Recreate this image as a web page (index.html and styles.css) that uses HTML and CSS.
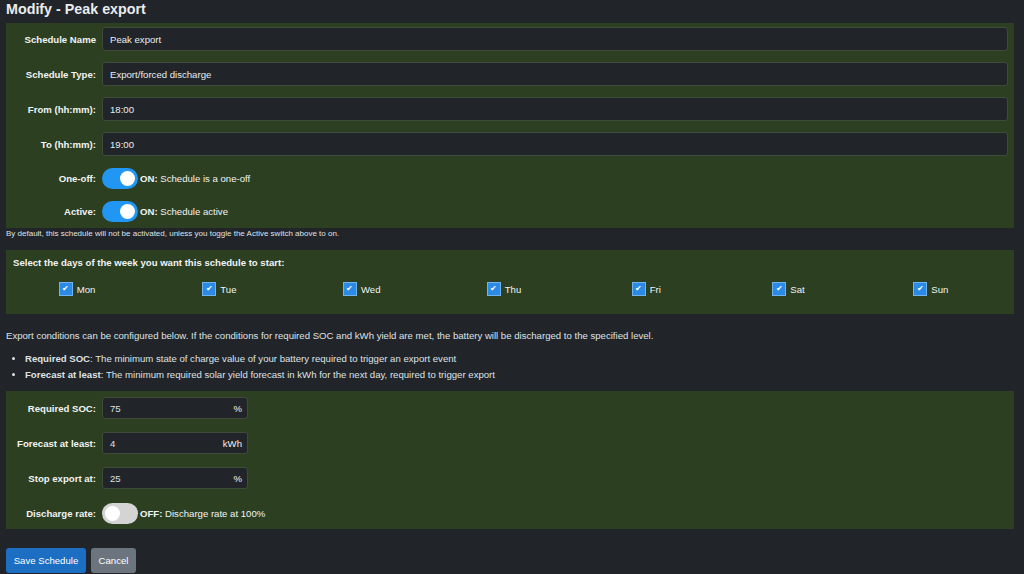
FILE: index.html
```html
<!DOCTYPE html>
<html lang="en">
<head>
  <meta charset="UTF-8" />
  <title>Modify - Peak export</title>
  <link rel="stylesheet" href="styles.css">
</head>
<body>
  <h1 class="title">Modify - Peak export</h1>

  <form class="schedule-form">
    <div class="panel panel-main">
      <div class="row">
        <label class="lbl">Schedule Name</label>
        <input class="field" type="text" value="Peak export">
      </div>
      <div class="row">
        <label class="lbl">Schedule Type:</label>
        <input class="field" type="text" value="Export/forced discharge">
      </div>
      <div class="row">
        <label class="lbl">From (hh:mm):</label>
        <input class="field" type="text" value="18:00">
      </div>
      <div class="row">
        <label class="lbl">To (hh:mm):</label>
        <input class="field" type="text" value="19:00">
      </div>
      <div class="row row-switch">
        <label class="lbl">One-off:</label>
        <span class="switch on"><span class="knob"></span></span>
        <span class="switch-text"><b>ON:</b> Schedule is a one-off</span>
      </div>
      <div class="row row-switch">
        <label class="lbl">Active:</label>
        <span class="switch on"><span class="knob"></span></span>
        <span class="switch-text"><b>ON:</b> Schedule active</span>
      </div>
    </div>

    <p class="note">By default, this schedule will not be activated, unless you toggle the Active switch above to on.</p>

    <div class="panel panel-days">
      <div class="days-title">Select the days of the week you want this schedule to start:</div>
      <div class="days">
        <label class="day"><span class="check">&#10004;</span>Mon</label>
        <label class="day"><span class="check">&#10004;</span>Tue</label>
        <label class="day"><span class="check">&#10004;</span>Wed</label>
        <label class="day"><span class="check">&#10004;</span>Thu</label>
        <label class="day"><span class="check">&#10004;</span>Fri</label>
        <label class="day"><span class="check">&#10004;</span>Sat</label>
        <label class="day"><span class="check">&#10004;</span>Sun</label>
      </div>
    </div>

    <p class="intro">Export conditions can be configured below. If the conditions for required SOC and kWh yield are met, the battery will be discharged to the specified level.</p>
    <ul class="hints">
      <li><b>Required SOC</b>: The minimum state of charge value of your battery required to trigger an export event</li>
      <li><b>Forecast at least</b>: The minimum required solar yield forecast in kWh for the next day, required to trigger export</li>
    </ul>

    <div class="panel panel-cond">
      <div class="row row-small">
        <label class="lbl">Required SOC:</label>
        <div class="unit-field"><span>75</span><span>%</span></div>
      </div>
      <div class="row row-small">
        <label class="lbl">Forecast at least:</label>
        <div class="unit-field"><span>4</span><span>kWh</span></div>
      </div>
      <div class="row row-small">
        <label class="lbl">Stop export at:</label>
        <div class="unit-field"><span>25</span><span>%</span></div>
      </div>
      <div class="row row-small">
        <label class="lbl">Discharge rate:</label>
        <span class="switch"><span class="knob"></span></span>
        <span class="switch-text"><b>OFF:</b> Discharge rate at 100%</span>
      </div>
    </div>

    <div class="actions">
      <button type="button" class="btn btn-save">Save Schedule</button>
      <button type="button" class="btn btn-cancel">Cancel</button>
    </div>
  </form>
</body>
</html>
```

FILE: styles.css
```css
body {
  margin: 0;
  background: #212529;
  color: #dee2e6;
  font-family: "Liberation Sans", Arial, sans-serif;
  font-size: 9.6px;
  height: 574px;
  overflow: hidden;
}

.title {
  margin: 0;
  padding: 0 6px;
  height: 23px;
  line-height: 18px;
  font-size: 14.3px;
  font-weight: bold;
  color: #e9ecef;
}

.panel {
  background: #2c4021;
  margin: 0 10px 0 6px;
}

.panel-main {
  padding: 4px 6px 6px 0;
  display: flex;
  flex-direction: column;
  gap: 11px;
}

.row {
  display: flex;
  align-items: center;
  gap: 6px;
  min-height: 24px;
}

.row-switch {
  min-height: 22px;
}

.lbl {
  width: 90px;
  text-align: right;
  font-weight: bold;
  color: #f1f3f5;
  flex-shrink: 0;
}

.field {
  flex: 1;
  height: 24px;
  box-sizing: border-box;
  background: #212529;
  border: 1px solid #3d4a3c;
  border-radius: 3px;
  color: #e9ecef;
  font-family: inherit;
  font-size: 9.6px;
  padding: 0 7px;
}

.switch {
  width: 36px;
  height: 21px;
  border-radius: 11px;
  background: #d4d4d4;
  position: relative;
  flex-shrink: 0;
}

.switch.on {
  background: #2196f3;
}

.switch .knob {
  position: absolute;
  top: 3px;
  left: 3px;
  width: 15px;
  height: 15px;
  border-radius: 50%;
  background: #fff;
}

.switch.on .knob {
  left: 18px;
}

.switch-text {
  margin-left: -4px;
  color: #f1f3f5;
}

.note {
  margin: 1px 0 0 6px;
  height: 21px;
  font-size: 8px;
  line-height: 10px;
  color: #dee2e6;
}

.panel-days {
  padding: 6px 12px 16px 0;
}

.days-title {
  padding-left: 7px;
  font-weight: bold;
  line-height: 14px;
  color: #f1f3f5;
}

.days {
  margin-top: 10px;
  display: grid;
  grid-template-columns: repeat(7, 1fr);
  justify-items: center;
  height: 18px;
  align-items: center;
}

.day {
  display: flex;
  align-items: center;
  gap: 4px;
  color: #f1f3f5;
}

.check {
  width: 14px;
  height: 14px;
  box-sizing: border-box;
  background: #2a8ae6;
  border: 1px solid #6fb3f0;
  color: #fff;
  font-size: 8px;
  line-height: 12px;
  text-align: center;
}

.intro {
  margin: 15px 0 0 6px;
  line-height: 14px;
}

.hints {
  margin: 8px 0 0 0;
  padding-left: 25px;
  line-height: 16px;
}

.panel-cond {
  margin-top: 8px;
  padding: 6px 6px 5px 0;
  display: flex;
  flex-direction: column;
  gap: 13px;
}

.row-small {
  min-height: 22px;
}

.unit-field {
  width: 146px;
  height: 22px;
  box-sizing: border-box;
  background: #212529;
  border: 1px solid #3d4a3c;
  border-radius: 3px;
  display: flex;
  justify-content: space-between;
  align-items: center;
  padding: 0 5px 0 7px;
}

.unit-field span:last-child {
  color: #f1f3f5;
}

.actions {
  margin: 19px 0 0 6px;
  display: flex;
  gap: 5px;
}

.btn {
  height: 25px;
  border: none;
  border-radius: 3px;
  font-family: inherit;
  font-size: 9.6px;
  color: #fff;
  padding: 0 7px;
}

.btn-save {
  background: #1b6ec2;
  width: 80px;
}

.btn-cancel {
  background: #6c757d;
  width: 45px;
  padding: 0;
}
```
